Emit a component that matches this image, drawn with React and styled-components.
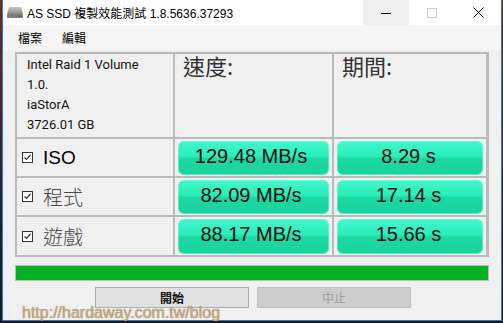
import React from "react";
import styled, { createGlobalStyle } from "styled-components";

const Global = createGlobalStyle`
  html, body { margin: 0; padding: 0; }
  body {
    background: #1c1c20;
    width: 503px;
    height: 323px;
    overflow: hidden;
    font-family: "Liberation Sans", "Noto Sans CJK TC", sans-serif;
  }
`;

const Stage = styled.div`
  position: relative;
  width: 503px;
  height: 323px;
  padding-left: 2px;
  box-sizing: border-box;
  background: linear-gradient(to bottom, #6a2b2b 0%, #2a2230 60%, #1a1a1e 100%);
`;

const Window = styled.div`
  width: 500px;
  height: 321px;
  box-sizing: border-box;
  border: 1px solid #2b7bd3;
  border-top: none;
  background: #f0f0f0;
  display: flex;
  flex-direction: column;
`;

const TitleBar = styled.div`
  height: 25px;
  background: #ffffff;
  display: flex;
  align-items: center;
`;

const AppIcon = styled.svg`
  width: 18px;
  height: 13px;
  margin-left: 3px;
  margin-right: 3px;
`;

const TitleText = styled.div`
  font-size: 12px;
  color: #000;
  flex: 1;
  white-space: nowrap;
`;

const Ctrl = styled.div`
  width: 46px;
  height: 25px;
  display: flex;
  align-items: center;
  justify-content: center;
  background: ${(p) => (p.$hover ? "#efefef" : "transparent")};
`;

const MenuBar = styled.div`
  height: 25px;
  background: #f5f5f5;
  display: flex;
  align-items: center;
  padding-left: 5px;
`;

const MenuItem = styled.div`
  padding: 0 10px;
  font-size: 12px;
  font-family: "Noto Sans CJK TC", sans-serif;
  color: #000;
`;

const Main = styled.div`
  padding: 2px 12px 0 12px;
  display: flex;
  flex-direction: column;
`;

const Table = styled.div`
  display: grid;
  grid-template-columns: 156px 157px 152px;
  grid-template-rows: 83px 37px 37px 38px;
  gap: 2px;
  padding: 2px;
  background: #bababa;
`;

const Cell = styled.div`
  background: #f0f0f0;
  box-sizing: border-box;
`;

const InfoCell = styled(Cell)`
  padding: 1px 0 0 10px;
  font-family: Roboto, "Liberation Sans", sans-serif;
  font-size: 13px;
  line-height: 20px;
  color: #111;
`;

const HeadCell = styled(Cell)`
  padding-left: 8px;
  font-family: "Noto Sans CJK TC", sans-serif;
  font-size: 22px;
  line-height: 22px;
  color: #333;
`;

const LabelCell = styled(Cell)`
  display: flex;
  align-items: center;
  padding-left: 5px;
  gap: 10px;
`;

const Label = styled.span`
  font-size: ${(p) => (p.$latin ? "19px" : "20px")};
  font-family: ${(p) =>
    p.$latin ? '"Liberation Sans", sans-serif' : '"Noto Sans CJK TC", sans-serif'};
  color: ${(p) => (p.$latin ? "#000" : "#4a4a4a")};
  font-weight: ${(p) => (p.$latin ? 400 : 300)};
`;

const Check = styled.svg`
  width: 11px;
  height: 11px;
  flex: none;
`;

const ValueCell = styled(Cell)`
  padding: 2px 3px 1px 3px;
  display: flex;
`;

const GreenBox = styled.div`
  flex: 1;
  border-radius: 6px;
  background: linear-gradient(
    to bottom,
    #44f7cb 0%,
    #2aedba 45%,
    #1cd8a3 52%,
    #19d39e 100%
  );
  box-shadow: inset 0 0 0 1px rgba(120, 255, 215, 0.55);
  display: flex;
  align-items: center;
  justify-content: center;
  padding: 0 ${(p) => p.$pr}px 4px 0;
  font-family: "Liberation Sans", sans-serif;
  font-size: 20px;
  color: #0d0d0d;
  white-space: nowrap;
`;

const Progress = styled.div`
  margin-top: 8px;
  height: 16px;
  box-sizing: border-box;
  border: 1px solid #bcbcbc;
  background: #e6e6e6;
`;

const ProgressFill = styled.div`
  height: 100%;
  background: #06b025;
`;

const ButtonRow = styled.div`
  margin-top: 6px;
  display: flex;
  gap: 8px;
  padding-left: 80px;
`;

const Button = styled.div`
  width: 154px;
  height: 21px;
  box-sizing: border-box;
  border: 1px solid ${(p) => (p.$disabled ? "#bfbfbf" : "#adadad")};
  background: ${(p) => (p.$disabled ? "#cccccc" : "#e1e1e1")};
  color: ${(p) => (p.$disabled ? "#9c9c9c" : "#111")};
  display: flex;
  align-items: center;
  justify-content: center;
  font-family: "Noto Sans CJK TC", sans-serif;
  font-size: 12px;
  line-height: 14px;
  font-weight: ${(p) => (p.$disabled ? 400 : 700)};
`;

const Watermark = styled.div`
  position: absolute;
  left: 22px;
  top: 306px;
  font-family: "Liberation Sans", sans-serif;
  font-size: 16px;
  line-height: 14px;
  color: #cba97c;
  text-shadow: 0 0 1px rgba(90, 70, 50, 0.7);
  white-space: nowrap;
`;

const CheckIcon = () => (
  <Check viewBox="0 0 11 11">
    <rect x="0.5" y="0.5" width="10" height="10" fill="#fff" stroke="#333" />
    <path d="M2.5 5.5 L4.5 7.5 L8.5 3" fill="none" stroke="#333" strokeWidth="1.2" />
  </Check>
);

const rows = [
  { label: "ISO", latin: true, speed: "129.48 MB/s", time: "8.29 s" },
  { label: "程式", speed: "82.09 MB/s", time: "17.14 s" },
  { label: "遊戲", speed: "88.17 MB/s", time: "15.66 s" },
];

export default function App() {
  return (
    <>
      <Global />
      <Stage>
        <Window>
          <TitleBar>
            <AppIcon viewBox="0 0 18 13">
              <defs>
                <linearGradient id="dg" x1="0" y1="0" x2="0" y2="1">
                  <stop offset="0" stopColor="#c8c8c8" />
                  <stop offset="1" stopColor="#8a8a8a" />
                </linearGradient>
              </defs>
              <path d="M3 1 H15 L17 8 H1 Z" fill="url(#dg)" />
              <rect x="1" y="8" width="16" height="4" rx="1" fill="#7c7c7c" />
              <rect x="12" y="9.5" width="3" height="1" fill="#5a5a5a" />
            </AppIcon>
            <TitleText>AS SSD 複製效能測試 1.8.5636.37293</TitleText>
            <Ctrl $hover>
              <svg width="10" height="10" viewBox="0 0 10 10">
                <path d="M0 5.5 H10" stroke="#000" strokeWidth="1" />
              </svg>
            </Ctrl>
            <Ctrl>
              <svg width="10" height="10" viewBox="0 0 10 10">
                <rect x="0.5" y="0.5" width="9" height="9" fill="none" stroke="#c8c8c8" />
              </svg>
            </Ctrl>
            <Ctrl>
              <svg width="11" height="11" viewBox="0 0 11 11">
                <path d="M0.5 0.5 L10.5 10.5 M10.5 0.5 L0.5 10.5" stroke="#000" strokeWidth="1" />
              </svg>
            </Ctrl>
          </TitleBar>
          <MenuBar>
            <MenuItem>檔案</MenuItem>
            <MenuItem>編輯</MenuItem>
          </MenuBar>
          <Main>
            <Table>
              <InfoCell>
                <div>Intel Raid 1 Volume</div>
                <div>1.0.</div>
                <div>iaStorA</div>
                <div>3726.01 GB</div>
              </InfoCell>
              <HeadCell>速度:</HeadCell>
              <HeadCell>期間:</HeadCell>
              {rows.map((r) => (
                <React.Fragment key={r.label}>
                  <LabelCell>
                    <CheckIcon />
                    <Label $latin={r.latin}>{r.label}</Label>
                  </LabelCell>
                  <ValueCell>
                    <GreenBox $pr={5}>{r.speed}</GreenBox>
                  </ValueCell>
                  <ValueCell>
                    <GreenBox $pr={3}>{r.time}</GreenBox>
                  </ValueCell>
                </React.Fragment>
              ))}
            </Table>
            <Progress>
              <ProgressFill style={{ width: "100%" }} />
            </Progress>
            <ButtonRow>
              <Button>開始</Button>
              <Button $disabled>中止</Button>
            </ButtonRow>
          </Main>
        </Window>
        <Watermark>http://hardaway.com.tw/blog</Watermark>
      </Stage>
    </>
  );
}
